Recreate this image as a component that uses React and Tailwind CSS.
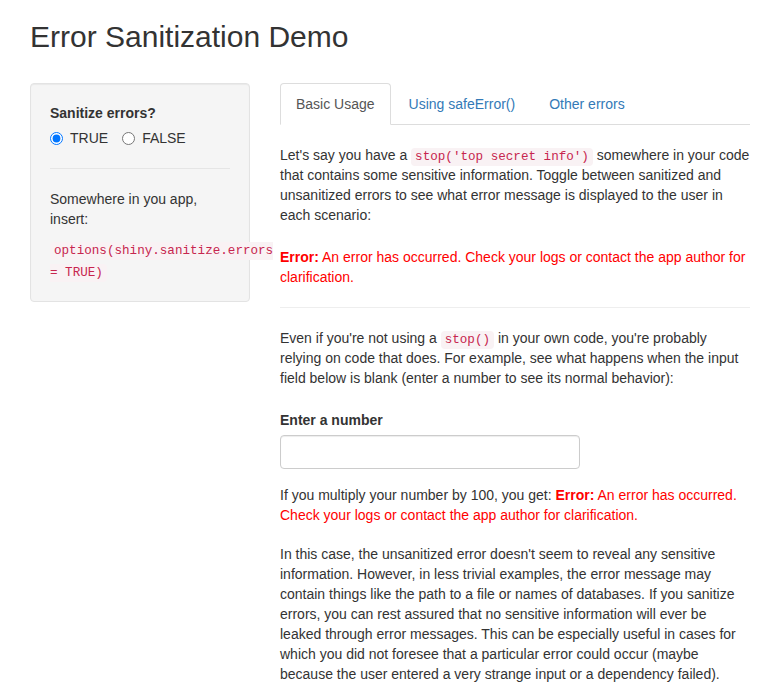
export default function App() {
  const sans = "font-['Liberation_Sans',Arial,sans-serif]";
  const code = "font-['Liberation_Mono','Courier_New',monospace] text-[12.6px] leading-none text-[#c7254e] bg-[#f9f2f4] px-1 py-[2px] rounded";

  return (
    <div className={`${sans} min-h-screen bg-white px-[30px] pt-5 text-[14px] leading-5 text-[#333]`}>
      <h2 className="text-[30px] leading-[33px] font-normal">Error Sanitization Demo</h2>

      <div className="mt-[30px] flex items-start gap-[30px]">
        {/* sidebar */}
        <div className="w-[220px] shrink-0 rounded border border-[#e3e3e3] bg-[#f5f5f5] p-[19px] shadow-[inset_0_1px_1px_rgba(0,0,0,0.05)]">
          <div className="font-bold">Sanitize errors?</div>
          <div className="mt-[5px] flex gap-[14px]">
            <label className="flex items-center gap-[7px]">
              <input type="radio" name="san" defaultChecked className="m-0 h-[13px] w-[13px]" />
              TRUE
            </label>
            <label className="flex items-center gap-[7px]">
              <input type="radio" name="san" className="m-0 h-[13px] w-[13px]" />
              FALSE
            </label>
          </div>
          <hr className="my-5 border-t border-[#e5e5e5]" />
          <p className="mb-[10px]">Somewhere in you app, insert:</p>
          <div className="leading-[21.5px]">
            <code className={code}>options(shiny.sanitize.errors = TRUE)</code>
          </div>
        </div>

        {/* main */}
        <div className="w-[470px] shrink-0">
          <div className="flex border-b border-[#ddd]">
            <div className="-mb-px mr-[2px] rounded-t border border-[#ddd] border-b-white bg-white px-[15px] py-[10px] text-[#555]">
              Basic Usage
            </div>
            <div className="-mb-px mr-[2px] border border-transparent px-[15px] py-[10px] text-[#337ab7]">
              Using safeError()
            </div>
            <div className="-mb-px mr-[2px] border border-transparent px-[15px] py-[10px] text-[#337ab7]">
              Other errors
            </div>
          </div>

          <p className="mt-5">
            Let's say you have a <code className={code}>stop('top secret info')</code> somewhere in your code
            that contains some sensitive information. Toggle between sanitized and unsanitized errors to see
            what error message is displayed to the user in each scenario:
          </p>
          <div className="mt-[22px] text-[#ff0000]">
            <b>Error:</b> An error has occurred. Check your logs or contact the app author for clarification.
          </div>

          <hr className="my-5 border-t border-[#eee]" />

          <p>
            Even if you're not using a <code className={code}>stop()</code> in your own code, you're probably
            relying on code that does. For example, see what happens when the input field below is blank
            (enter a number to see its normal behavior):
          </p>

          <div className="mt-[22px] font-bold">Enter a number</div>
          <input
            type="text"
            className="mt-[5px] block h-[34px] w-[300px] rounded border border-[#ccc] bg-white px-3 shadow-[inset_0_1px_1px_rgba(0,0,0,0.075)] outline-none"
          />

          <p className="mt-4">
            If you multiply your number by 100, you get:{' '}
            <span className="text-[#ff0000]">
              <b>Error:</b> An error has occurred. Check your logs or contact the app author for clarification.
            </span>
          </p>

          <p className="mt-[19px]">
            In this case, the unsanitized error doesn't seem to reveal any sensitive information. However, in
            less trivial examples, the error message may contain things like the path to a file or names of
            databases. If you sanitize errors, you can rest assured that no sensitive information will ever be
            leaked through error messages. This can be especially useful in cases for which you did not
            foresee that a particular error could occur (maybe because the user entered a very strange input
            or a dependency failed).
          </p>
        </div>
      </div>
    </div>
  );
}
